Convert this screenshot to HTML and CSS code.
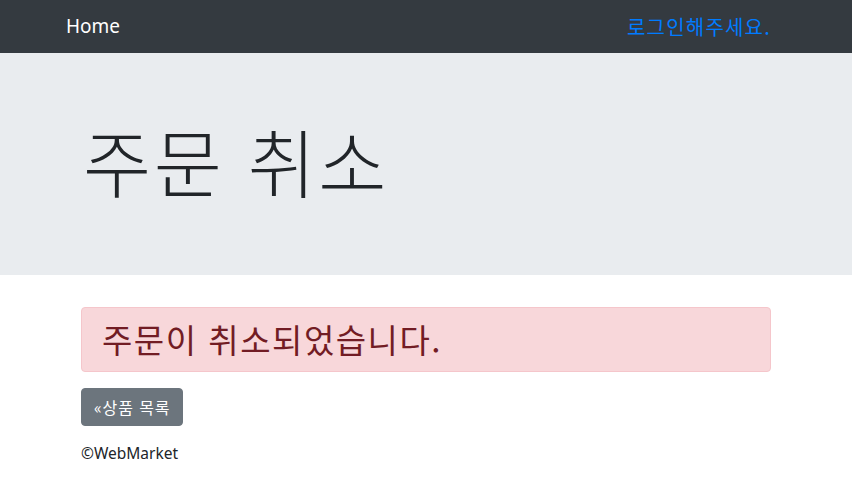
FILE: index.html
```html
<!DOCTYPE html>
<html lang="ko">
<head>
    <meta charset="UTF-8">
    <meta name="viewport" content="width=device-width, initial-scale=1.0">
    <title>주문 취소</title>
    <link rel="stylesheet" href="styles.css">
</head>
<body>
    <nav class="navbar">
        <div class="container navbar-inner">
            <a href="#" class="navbar-brand">Home</a>
            <a href="#" class="navbar-login">로그인해주세요.</a>
        </div>
    </nav>
    <div class="jumbotron">
        <div class="container">
            <h1 class="display">주문 취소</h1>
        </div>
    </div>
    <div class="container">
        <div class="alert">
            <h2 class="alert-text">주문이 취소되었습니다.</h2>
        </div>
        <a href="#" class="btn">&laquo;상품 목록</a>
    </div>
    <footer class="container footer">
        <p>&copy;WebMarket</p>
    </footer>
</body>
</html>
```

FILE: styles.css
```css
/* Osnovni stil */
body {
    margin: 0;
    font-family: "Noto Sans", "Noto Sans CJK KR", sans-serif;
    font-size: 16px;
    line-height: 1.5;
    color: #212529;
    background-color: #ffffff;
}

.container {
    width: 720px;
    margin: 0 auto;
    padding: 0 15px;
    box-sizing: border-box;
}

/* Navigacija */
.navbar {
    background-color: #343a40;
    height: 53px;
}

.navbar-inner {
    padding: 0;
    height: 100%;
    display: flex;
    align-items: center;
    justify-content: space-between;
}

.navbar-brand {
    color: #ffffff;
    font-size: 19px;
    text-decoration: none;
}

.navbar-login {
    color: #007bff;
    font-family: "Noto Sans CJK KR", sans-serif;
    font-size: 20px;
    letter-spacing: 1.2px;
    text-decoration: none;
    margin-right: 15px;
}

/* Naslov */
.jumbotron {
    background-color: #e9ecef;
    padding: 64px 0;
    margin-bottom: 32px;
}

.display {
    margin: 0 0 8px 2px;
    font-family: "Noto Sans CJK KR", sans-serif;
    font-size: 74px;
    font-weight: 300;
    letter-spacing: 2.6px;
    line-height: 86px;
}

/* Poruka */
.alert {
    background-color: #f8d7da;
    border: 1px solid #f5c6cb;
    border-radius: 4px;
    color: #721c24;
    padding: 12px 20px;
    margin-bottom: 16px;
}

.alert-text {
    margin: 0;
    font-family: "Noto Sans CJK KR", sans-serif;
    font-size: 33px;
    font-weight: 400;
    letter-spacing: 1.5px;
    line-height: 39px;
}

/* Gumb */
.btn {
    display: inline-block;
    background-color: #6c757d;
    border: 1px solid #6c757d;
    border-radius: 4px;
    color: #ffffff;
    font-family: "Noto Sans CJK KR", sans-serif;
    font-size: 16px;
    letter-spacing: 0.9px;
    line-height: 24px;
    padding: 6px 12px;
    text-decoration: none;
}

.footer p {
    margin: 16px 0;
    font-size: 15.5px;
}
```
